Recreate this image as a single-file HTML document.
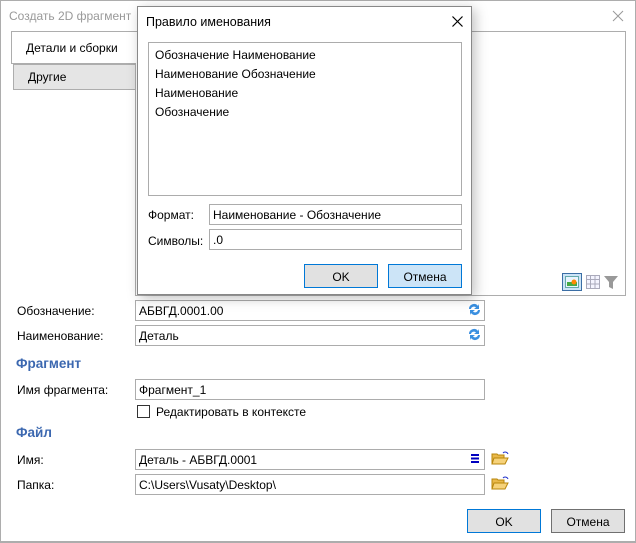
<!DOCTYPE html>
<html><head><meta charset="utf-8"><style>
*{box-sizing:border-box;margin:0;padding:0}
body{width:636px;height:543px;background:#fff;font-family:"Liberation Sans","Noto Sans CJK SC",sans-serif;font-size:12px;color:#000;position:relative;overflow:hidden}
.a{position:absolute}
.inp{position:absolute;border:1px solid #acacac;background:#fff;padding:3px 0 0 3px;height:21px;font-size:12px}
.btn{position:absolute;border:1px solid #adadad;background:#e1e1e1;text-align:center;padding-top:5px;height:24px;font-size:12px}
.lbl{position:absolute;font-size:12px}
.h{position:absolute;color:#3c68b0;font-size:13.5px;font-weight:bold}
</style></head><body>
<div class="a" style="left:0;top:0;width:636px;height:543px;border:1px solid #adadad;border-bottom:2px solid #adadad"></div>
<div class="lbl" style="left:9px;top:9px;color:#999">Создать 2D фрагмент</div>
<svg class="a" style="left:612px;top:10px" width="12" height="12"><path d="M1 1L11 11M11 1L1 11" stroke="#999" stroke-width="1"/></svg>
<div class="a" style="left:135px;top:31px;width:491px;height:265px;border:1px solid #adadad"></div>
<div class="a" style="left:11px;top:31px;width:125px;height:33px;border:1px solid #adadad;border-right:none;background:#fff"></div>
<div class="lbl" style="left:26px;top:41px">Детали и сборки</div>
<div class="a" style="left:13px;top:64px;width:123px;height:26px;border:1px solid #adadad;background:#e5e5e5"></div>
<div class="lbl" style="left:28px;top:70px">Другие</div>
<div class="a" style="left:562px;top:273px;width:20px;height:18px;border:1px solid #3b6ea5;background:#cce4f7"></div>
<svg class="a" style="left:565px;top:276px" width="14" height="12"><rect x="0.5" y="0.5" width="13" height="11" fill="#e8f4ff" stroke="#6aa"/><rect x="2" y="6" width="10" height="4" fill="#4a4"/><circle cx="9" cy="6" r="2.5" fill="#f80"/></svg>
<svg class="a" style="left:586px;top:275px" width="14" height="14"><path d="M0.5 0.5h13v13h-13zM4.5 0.5v13M9 0.5v13M0.5 4.5h13M0.5 9h13" fill="#f4f4ff" stroke="#aab"/></svg>
<svg class="a" style="left:604px;top:275px" width="14" height="15"><path d="M0 1h14L9 7v7L5 12V7z" fill="#999"/></svg>
<div class="lbl" style="left:17px;top:304px">Обозначение:</div>
<div class="inp" style="left:135px;top:300px;width:350px">АБВГД.0001.00</div>
<div class="lbl" style="left:17px;top:329px">Наименование:</div>
<div class="inp" style="left:135px;top:325px;width:350px">Деталь</div>
<svg class="a" style="left:467px;top:302px" width="15" height="15"><path d="M2 7a5 5 0 0 1 9-3l1-2v5h-5l2-1.5A3 3 0 0 0 4 7z" fill="#3a8fe0"/><path d="M13 8a5 5 0 0 1-9 3l-1 2V8h5l-2 1.5A3 3 0 0 0 11 8z" fill="#3a8fe0"/></svg>
<svg class="a" style="left:467px;top:327px" width="15" height="15"><path d="M2 7a5 5 0 0 1 9-3l1-2v5h-5l2-1.5A3 3 0 0 0 4 7z" fill="#3a8fe0"/><path d="M13 8a5 5 0 0 1-9 3l-1 2V8h5l-2 1.5A3 3 0 0 0 11 8z" fill="#3a8fe0"/></svg>
<div class="h" style="left:16px;top:356px">Фрагмент</div>
<div class="lbl" style="left:17px;top:383px">Имя фрагмента:</div>
<div class="inp" style="left:135px;top:379px;width:350px">Фрагмент_1</div>
<div class="a" style="left:137px;top:405px;width:13px;height:13px;border:1px solid #333;background:#fff"></div>
<div class="lbl" style="left:156px;top:405px">Редактировать в контексте</div>
<div class="h" style="left:16px;top:425px">Файл</div>
<div class="lbl" style="left:17px;top:453px">Имя:</div>
<div class="inp" style="left:135px;top:449px;width:350px">Деталь - АБВГД.0001</div>
<svg class="a" style="left:471px;top:454px" width="8" height="9"><path d="M0 1h8M0 4.5h8M0 8h8" stroke="#0000c0" stroke-width="2"/></svg>
<div class="lbl" style="left:17px;top:478px">Папка:</div>
<div class="inp" style="left:135px;top:474px;width:350px">C:\Users\Vusaty\Desktop\</div>
<svg class="a" style="left:491px;top:450px" width="18" height="16"><path d="M1 4h5l1 1h6v9H1z" fill="#e9b84a" stroke="#b8860b"/><path d="M3 8h14l-3 6H1z" fill="#f6d27a" stroke="#b8860b"/><path d="M12 3a3 3 0 0 1 5 1" stroke="#2233cc" fill="none"/></svg>
<svg class="a" style="left:491px;top:475px" width="18" height="16"><path d="M1 4h5l1 1h6v9H1z" fill="#e9b84a" stroke="#b8860b"/><path d="M3 8h14l-3 6H1z" fill="#f6d27a" stroke="#b8860b"/><path d="M12 3a3 3 0 0 1 5 1" stroke="#2233cc" fill="none"/></svg>
<div class="btn" style="left:467px;top:509px;width:74px;border-color:#0078d7">OK</div>
<div class="btn" style="left:551px;top:509px;width:74px;border-color:#707070">Отмена</div>
<div class="a" style="left:137px;top:6px;width:335px;height:289px;background:#fff;border:1px solid #888;box-shadow:3px 3px 12px rgba(0,0,0,0.25)"></div>
<div class="lbl" style="left:146px;top:15px;font-size:12.5px">Правило именования</div>
<svg class="a" style="left:452px;top:16px" width="11" height="11"><path d="M0.5 0.5L10.5 10.5M10.5 0.5L0.5 10.5" stroke="#000" stroke-width="1.2"/></svg>
<div class="a" style="left:148px;top:42px;width:314px;height:154px;border:1px solid #acacac"></div>
<div class="lbl" style="left:155px;top:46px;line-height:19px">Обозначение Наименование<br>Наименование Обозначение<br>Наименование<br>Обозначение</div>
<div class="lbl" style="left:148px;top:208px">Формат:</div>
<div class="inp" style="left:209px;top:204px;width:253px">Наименование - Обозначение</div>
<div class="lbl" style="left:148px;top:234px">Символы:</div>
<div class="inp" style="left:209px;top:229px;width:253px">.0</div>
<div class="btn" style="left:304px;top:264px;width:74px;border-color:#0078d7">OK</div>
<div class="btn" style="left:388px;top:264px;width:74px;border-color:#0078d7;background:#cce4f7">Отмена</div>
</body></html>
